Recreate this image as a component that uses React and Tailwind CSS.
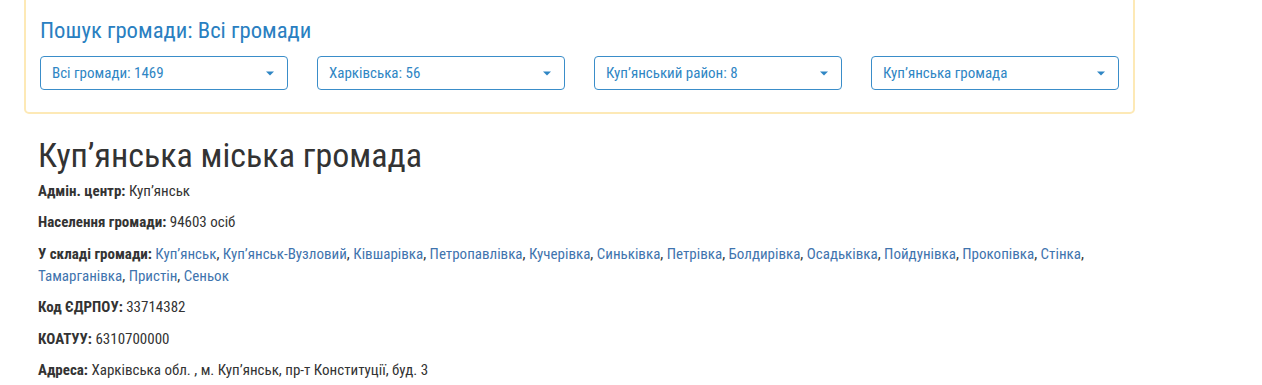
const selects = ["Всі громади: 1469", "Харківська: 56", "Куп’янський район: 8", "Куп’янська громада"];

const villages = ["Куп’янськ", "Куп’янськ-Вузловий", "Ківшарівка", "Петропавлівка", "Кучерівка", "Синьківка", "Петрівка", "Болдирівка", "Осадьківка", "Пойдунівка", "Прокопівка", "Стінка", "Тамарганівка", "Пристін", "Сеньок"];

function Select({ label }) {
  return (
    <div className="h-[34px] border border-[#3a8dc9] rounded-[4px] pl-[11px] pr-[13px] flex items-center justify-between text-[15px] text-[#2f86c4]">
      <span>{label}</span>
      <svg width="8" height="5" viewBox="0 0 8 5" className="fill-[#2f86c4]">
        <path d="M0 0.5 L8 0.5 L4 4.5 Z" />
      </svg>
    </div>
  );
}

function Row({ label, children }) {
  return (
    <p className="text-[15px] leading-[22px] mb-[9.4px]">
      <b className="font-bold">{label}</b> {children}
    </p>
  );
}

export default function App() {
  return (
    <div className="font-['Roboto_Condensed',Roboto,sans-serif] text-[#333] bg-white min-h-screen overflow-hidden">
      <div className="ml-[24px] w-[1111px]">
        <div className="-mt-[6px] border-2 border-[#fde9b6] rounded-[5px] px-[14px] pt-[21px] pb-[22px]">
          <h4 className="text-[22.7px] leading-[27px] text-[#2a7fc1] mb-[12px]">Пошук громади: Всі громади</h4>
          <div className="grid grid-cols-4 gap-[29px]">
            {selects.map((s) => (
              <Select key={s} label={s} />
            ))}
          </div>
        </div>
        <div className="pl-[14px] pr-[16px] pt-[21px]">
          <h2 className="text-[34px] leading-[40px] mb-[5px] text-[#333]">Куп’янська міська громада</h2>
          <Row label="Адмін. центр:">Куп’янськ</Row>
          <Row label="Населення громади:">94603 осіб</Row>
          <Row label="У складі громади:">
            {villages.map((v, i) => (
              <span key={v}>
                <a className="text-[#3f74ae]">{v}</a>
                {i < villages.length - 1 ? ", " : ""}
              </span>
            ))}
          </Row>
          <Row label="Код ЄДРПОУ:">33714382</Row>
          <Row label="КОАТУУ:">6310700000</Row>
          <Row label="Адреса:">Харківська обл. , м. Куп’янськ, пр-т Конституції, буд. 3</Row>
        </div>
      </div>
    </div>
  );
}
